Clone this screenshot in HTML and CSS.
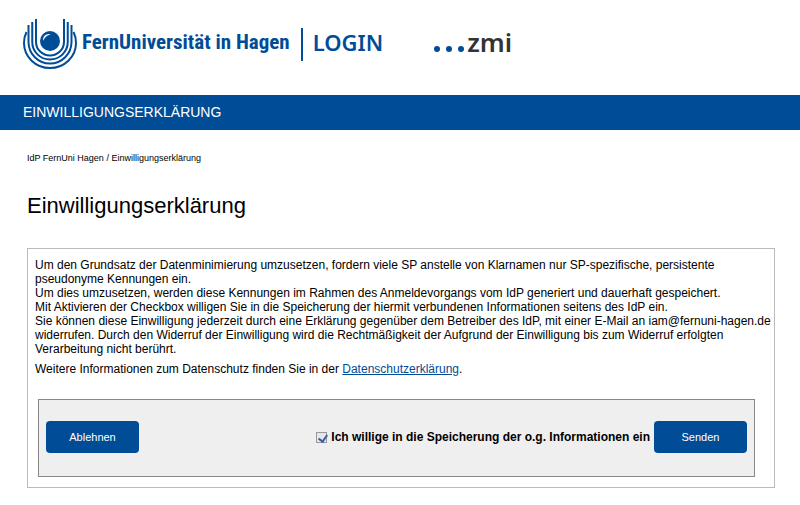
FILE: index.html
```html
<!DOCTYPE html>
<html lang="de">
<head>
    <meta charset="UTF-8">
    <meta name="viewport" content="width=device-width, initial-scale=1.0">
    <title>Einwilligungserklärung</title>
    <link rel="stylesheet" href="styles.css">
</head>
<body>
    <header class="header">
        <svg class="logo" width="54" height="52" viewBox="0 0 54 52" aria-hidden="true">
            <g fill="none" stroke="#004c97" stroke-width="2">
                <path d="M3.500 14 C1.500 18 1 21 1 25 A26 25 0 0 0 53 25 C53 21 52.500 18 50.500 14"/>
                <path d="M5.500 7 V24 A21.500 21.500 0 0 0 48.500 24 V7"/>
                <path d="M9.250 4 V24 A17.750 17.500 0 0 0 44.750 24 V4"/>
                <path d="M13 1 V24 A14 13.500 0 0 0 41 24 V1"/>
            </g>
            <circle cx="27" cy="23" r="10" fill="#004c97"/>
            <path d="M20 23 C19.500 18 23 15.500 28 16 C24 17.500 22 19 20 23 Z" fill="#fff"/>
        </svg>
        <span class="university">FernUniversität in Hagen</span>
        <span class="login">LOGIN</span>
        <svg class="dots" width="32" height="6" viewBox="0 0 32 6" aria-hidden="true">
            <g fill="#004c97">
                <circle cx="4" cy="3" r="3"/>
                <circle cx="16" cy="3" r="3"/>
                <circle cx="28" cy="3" r="3"/>
            </g>
        </svg>
        <span class="zmi">zmi</span>
    </header>

    <div class="title-bar">EINWILLIGUNGSERKLÄRUNG</div>

    <main class="content">
        <nav class="breadcrumb">IdP FernUni Hagen / Einwilligungserklärung</nav>
        <h1>Einwilligungserklärung</h1>

        <div class="box">
            <p>
                Um den Grundsatz der Datenminimierung umzusetzen, fordern viele SP anstelle von Klarnamen nur SP-spezifische, persistente pseudonyme Kennungen ein.<br>
                Um dies umzusetzen, werden diese Kennungen im Rahmen des Anmeldevorgangs vom IdP generiert und dauerhaft gespeichert.<br>
                Mit Aktivieren der Checkbox willigen Sie in die Speicherung der hiermit verbundenen Informationen seitens des IdP ein.<br>
                Sie können diese Einwilligung jederzeit durch eine Erklärung gegenüber dem Betreiber des IdP, mit einer E-Mail an iam@fernuni-hagen.de widerrufen. Durch den Widerruf der Einwilligung wird die Rechtmäßigkeit der Aufgrund der Einwilligung bis zum Widerruf erfolgten Verarbeitung nicht berührt.
            </p>
            <p>Weitere Informationen zum Datenschutz finden Sie in der <a href="#datenschutz">Datenschutzerklärung</a>.</p>

            <form class="consent">
                <button type="button">Ablehnen</button>
                <div class="accept">
                    <input type="checkbox" id="consent" checked>
                    <label for="consent">Ich willige in die Speicherung der o.g. Informationen ein</label>
                    <button type="submit">Senden</button>
                </div>
            </form>
        </div>
    </main>
</body>
</html>
```

FILE: styles.css
```css
* { box-sizing: border-box; }
body { margin: 0; background: #fff; color: #000; font-family: Arial, "Liberation Sans", sans-serif; font-size: 12px; line-height: 14px; }

.header { display: flex; align-items: center; height: 95px; padding: 0 23px 12px; white-space: nowrap; }
.logo { margin: 4px 5px 0 0; }
.university { margin-top: 6px; padding: 0 11px 5px 0; border-right: 2px solid #004c97; color: #004c97; font-family: "Roboto Condensed", Roboto, sans-serif; font-size: 21px; line-height: 28px; font-weight: bold; }
.login { margin-left: 10px; color: #004c97; font-family: "Noto Sans", sans-serif; font-size: 22px; line-height: 32px; font-weight: 600; }
.dots { margin: 14px 2px 0 50px; }
.zmi { color: #333; font-family: "Noto Sans", sans-serif; font-size: 26px; line-height: 32px; font-weight: 600; }

.title-bar { height: 35px; padding: 0 23px; background: #004c97; color: #fff; font-size: 14px; line-height: 35px; }

.content { padding: 22px 25px 16px 27px; }
.breadcrumb { font-size: 9px; line-height: 12px; }
h1 { margin: 30px 0; font-size: 22px; line-height: 24px; font-weight: normal; }

.box { padding: 9px 3px 10px 7px; border: 1px solid #bbb; }
.box p { margin: 0 0 6px; }
.box a { color: #004c97; }

.consent { display: flex; justify-content: space-between; align-items: center; height: 78px; margin: 23px 16px 0 3px; padding: 0 7px 2px; background: #efefef; border: 1px solid #888; }
.accept { display: flex; align-items: center; gap: 4px; font-weight: bold; }

button { width: 93px; height: 32px; padding: 0; background: #004c97; color: #fff; border: none; border-radius: 4px; font-family: inherit; font-size: 11px; cursor: pointer; }
button:hover { background: #003a75; }

input[type="checkbox"] { appearance: none; width: 11px; height: 11px; margin: 0; border: 1px solid #999; background: #e4e8ee; }
input[type="checkbox"]:checked::before { content: ""; display: block; width: 4px; height: 7px; margin: 0 0 0 3px; border: solid #3a5da8; border-width: 0 2px 2px 0; transform: rotate(35deg); }
```
